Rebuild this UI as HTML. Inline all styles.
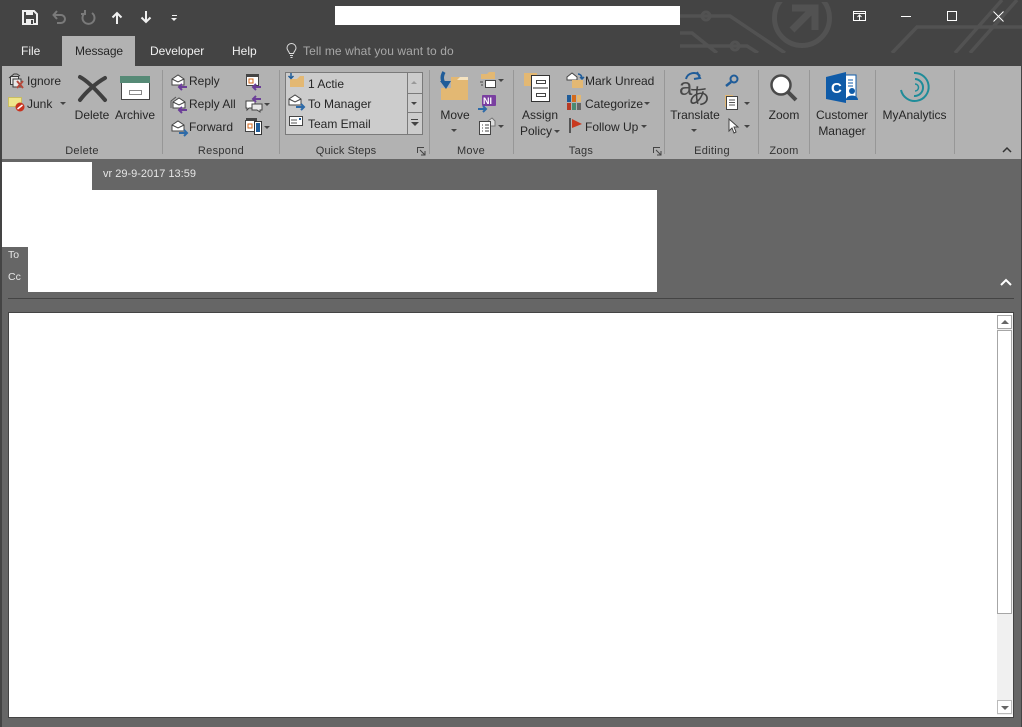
<!DOCTYPE html>
<html><head><meta charset="utf-8"><style>
html,body{margin:0;padding:0;background:#444}
#p{position:relative;width:1022px;height:727px;overflow:hidden;background:#444;font-family:"Liberation Sans",sans-serif;font-size:12px;color:#262626}
.t{position:absolute;white-space:nowrap;line-height:14px}
.c{position:absolute;white-space:nowrap;line-height:14px;text-align:center}
.g{position:absolute;white-space:nowrap;line-height:14px;text-align:center;top:144px;font-size:11px;color:#333;letter-spacing:.3px}
.b{position:absolute}
.sep{position:absolute;top:70px;width:1px;height:84px;background:#979797}
.a{position:absolute;width:0;height:0;border-left:3px solid transparent;border-right:3px solid transparent;border-top:3px solid #444}
.tab{position:absolute;top:44px;color:#f0f0f0;line-height:14px;font-size:12px}
svg{position:absolute;overflow:visible}
</style></head><body><div id="p">

<!-- title bar circuit pattern -->
<svg style="left:0;top:0;overflow:hidden" width="1022" height="53" fill="none" stroke="#525252" stroke-width="3.500">
<path d="M680 16H730L785 53M680 33H692L717 53M680 46H747L758 53"/>
<circle cx="706" cy="16" r="4" stroke-width="3"/><circle cx="735" cy="46" r="4" stroke-width="3"/>
<circle cx="802" cy="18" r="27.500" stroke-width="5"/>
<path d="M792 30L812 10M792 8H815V30" stroke-width="7"/>
<path d="M892 53L917 27H1022M955 53L1002 0M970 53L1017 0"/>
<rect x="760" y="0" width="80" height="2" fill="#444" stroke="none"/>
</svg>

<!-- QAT -->
<svg style="left:22px;top:10px" width="16" height="15"><path d="M1 1H12L15 4V14H1Z" fill="none" stroke="#f0f0f0" stroke-width="2"/><rect x="4" y="1" width="7" height="4" fill="#f0f0f0"/><rect x="4" y="9" width="8" height="5" fill="#f0f0f0"/><rect x="9" y="10" width="2" height="4" fill="#444"/></svg>
<svg style="left:52px;top:10px" width="15" height="15" fill="none" stroke="#7a7a7a" stroke-width="2"><path d="M2 5H9A4 4 0 0 1 9 13H5M5 1L1.500 5L5 9"/></svg>
<svg style="left:81px;top:10px" width="15" height="15" fill="none" stroke="#7a7a7a" stroke-width="2"><path d="M4 3A6 6 0 1 0 11 3M4 0V4H0"/></svg>
<svg style="left:111px;top:11px" width="12" height="13" fill="none" stroke="#f0f0f0" stroke-width="2"><path d="M6 13V2M1.500 6.500L6 2L10.500 6.500"/></svg>
<svg style="left:140px;top:11px" width="12" height="13" fill="none" stroke="#f0f0f0" stroke-width="2"><path d="M6 0V11M1.500 6.500L6 11L10.500 6.500"/></svg>
<div class="b" style="left:172px;top:15px;width:5px;height:1px;background:#f0f0f0"></div>
<div class="a" style="left:171px;top:18px;border-top-color:#f0f0f0"></div>

<div class="b" style="left:335px;top:6px;width:345px;height:19px;background:#fff"></div>

<!-- window controls -->
<svg style="left:853px;top:11px" width="14" height="11" fill="none" stroke="#fff"><rect x="0.500" y="0.500" width="12" height="9"/><path d="M0 2.500H13M6.500 9V4.500M4.500 6L6.500 4L8.500 6"/></svg>
<div class="b" style="left:901px;top:16px;width:10px;height:1px;background:#fff"></div>
<div class="b" style="left:947px;top:11px;width:8px;height:8px;border:1px solid #fff"></div>
<svg style="left:993px;top:11px" width="11" height="11" stroke="#fff"><path d="M0.500 0.500L10.500 10.500M10.500 0.500L0.500 10.500"/></svg>

<!-- tabs -->
<div class="b" style="left:62px;top:36px;width:73px;height:31px;background:#b2b2b2"></div>
<div class="tab" style="left:21px">File</div>
<div class="tab" style="left:75px;color:#262626;letter-spacing:-.1px">Message</div>
<div class="tab" style="left:150px;letter-spacing:-.05px">Developer</div>
<div class="tab" style="left:232px">Help</div>
<svg style="left:286px;top:43px" width="12" height="15" fill="none" stroke="#ddd"><path d="M3.500 10.500C3 8 1 7.500 1 5A4.500 4.500 0 0 1 10 5C10 7.500 8 8 7.500 10.500ZM4 12.500H7M4.500 14.500H6.500"/></svg>
<div class="tab" style="left:303px;color:#a8a8a8;letter-spacing:.1px">Tell me what you want to do</div>

<!-- ribbon -->
<div class="b" style="left:2px;top:66px;width:1019px;height:93px;background:#b2b2b2"></div>
<div class="sep" style="left:162px"></div>
<div class="sep" style="left:279px"></div>
<div class="sep" style="left:429px"></div>
<div class="sep" style="left:513px"></div>
<div class="sep" style="left:664px"></div>
<div class="sep" style="left:758px"></div>
<div class="sep" style="left:809px"></div>
<div class="sep" style="left:875px"></div>
<div class="sep" style="left:954px"></div>

<!-- Delete group -->
<svg style="left:8px;top:73px" width="17" height="16" fill="none" stroke="#3a3a3a"><path d="M1 5L6 1H9L12 3" /><rect x="2.500" y="3.500" width="8" height="8" fill="#e8e8e8"/><rect x="5" y="6" width="8" height="8" fill="#e8e8e8"/><path d="M9 8L15 15M15 8L9 15" stroke="#b5483a" stroke-width="2"/></svg>
<div class="t" style="left:27px;top:74px">Ignore</div>
<svg style="left:8px;top:97px" width="17" height="15"><rect x="0.500" y="0.500" width="13" height="9" fill="#efe58b" stroke="#c9bd62"/><circle cx="12" cy="10" r="4.500" fill="#c8321f"/><path d="M9.500 12L14.500 8" stroke="#fff" stroke-width="1.500"/></svg>
<div class="t" style="left:27px;top:97px">Junk</div>
<div class="a" style="left:60px;top:102px"></div>
<svg style="left:78px;top:75px" width="29" height="28" fill="none" stroke="#3f3f3f" stroke-width="4" stroke-linecap="round"><path d="M2 2C10 6 20 17 27 25M27 3C18 8 8 17 2 25"/></svg>
<div class="c" style="left:72px;top:108px;width:40px">Delete</div>
<div class="b" style="left:120px;top:76px;width:30px;height:7px;background:#568a76"></div>
<div class="b" style="left:121px;top:83px;width:27px;height:16px;background:#fff;border:1px solid #444;border-top:0"></div>
<div class="b" style="left:129px;top:90px;width:11px;height:3px;background:#fff;border:1px solid #888"></div>
<div class="c" style="left:112px;top:108px;width:46px">Archive</div>
<div class="g" style="left:62px;width:40px">Delete</div>

<!-- Respond group -->
<svg style="left:171px;top:74px" width="17" height="15"><path d="M1 5L7 1L13 5V11H1Z" fill="#fff" stroke="#444"/><path d="M1 5L7 8L13 5" fill="none" stroke="#444"/><path d="M16 13H9M11 10L8 13L11 16" fill="none" stroke="#6b3e98" stroke-width="2"/></svg>
<div class="t" style="left:189px;top:74px">Reply</div>
<svg style="left:170px;top:96px" width="18" height="16"><path d="M1 12V5L6 1" fill="none" stroke="#555"/><path d="M3 6L9 2L15 6V12H3Z" fill="#fff" stroke="#444"/><path d="M3 6L9 9L15 6" fill="none" stroke="#444"/><path d="M17 14H10M12 11L9 14L12 17" fill="none" stroke="#6b3e98" stroke-width="2"/></svg>
<div class="t" style="left:189px;top:97px">Reply All</div>
<svg style="left:171px;top:120px" width="17" height="15"><path d="M1 5L7 1L13 5V11H1Z" fill="#fff" stroke="#444"/><path d="M1 5L7 8L13 5" fill="none" stroke="#444"/><path d="M8 13H15M13 10L16 13L13 16" fill="none" stroke="#2d6aa8" stroke-width="2"/></svg>
<div class="t" style="left:189px;top:120px">Forward</div>
<svg style="left:246px;top:74px" width="16" height="16"><rect x="0.500" y="0.500" width="12" height="11" fill="#fff" stroke="#444"/><rect x="1" y="1" width="11" height="2" fill="#444"/><rect x="3" y="5" width="4" height="4" fill="none" stroke="#d46a1c"/><path d="M15 13H8M10 10L7 13L10 16" fill="none" stroke="#6b3e98" stroke-width="2"/></svg>
<svg style="left:245px;top:95px" width="20" height="17"><path d="M1 6H10V13H4L2 15V13H1Z" fill="#fff" stroke="#444"/><path d="M7 9H17V15H15V17L12 15H7Z" fill="#e8e8e8" stroke="#444"/><path d="M16 4H9M11 1L8 4L11 7" fill="none" stroke="#6b3e98" stroke-width="2"/></svg>
<div class="a" style="left:264px;top:103px"></div>
<svg style="left:245px;top:118px" width="18" height="18"><rect x="0.500" y="2.500" width="11" height="11" fill="#fff" stroke="#444"/><rect x="1" y="0" width="11" height="2" fill="#444"/><rect x="3" y="6" width="4" height="4" fill="none" stroke="#d46a1c"/><rect x="9.500" y="3.500" width="7" height="13" fill="#fff" stroke="#333"/><rect x="11" y="5" width="4" height="9" fill="#1f5c99"/></svg>
<div class="a" style="left:264px;top:126px"></div>
<div class="g" style="left:191px;width:60px">Respond</div>

<!-- Quick Steps -->
<div class="b" style="left:285px;top:72px;width:136px;height:61px;background:#ccc;border:1px solid #7a7a7a"></div>
<div class="b" style="left:407px;top:73px;width:1px;height:61px;background:#7a7a7a"></div>
<div class="b" style="left:408px;top:93px;width:14px;height:1px;background:#7a7a7a"></div>
<div class="b" style="left:408px;top:112px;width:14px;height:1px;background:#7a7a7a"></div>
<div class="a" style="left:411px;top:81px;border-top:0;border-bottom:3px solid #999"></div>
<div class="a" style="left:411px;top:102px"></div>
<div class="b" style="left:411px;top:119px;width:7px;height:1px;background:#444"></div>
<div class="a" style="left:411px;top:122px;border-left-width:4px;border-right-width:4px;border-top-width:4px"></div>
<svg style="left:287px;top:73px" width="18" height="15"><path d="M3 6H10L13 3H17V14H3Z" fill="#e3b873"/><path d="M4 0V5M1.500 3L4 5.500L6.500 3" fill="none" stroke="#1f5c99" stroke-width="1.500"/></svg>
<div class="t" style="left:308px;top:77px">1 Actie</div>
<svg style="left:288px;top:94px" width="17" height="16"><path d="M1 5L7 1L13 5V11H1Z" fill="#fff" stroke="#444"/><path d="M1 5L7 8L13 5" fill="none" stroke="#444"/><path d="M8 13H15M13 10L16 13L13 16" fill="none" stroke="#2d6aa8" stroke-width="2"/></svg>
<div class="t" style="left:308px;top:97px">To Manager</div>
<svg style="left:289px;top:116px" width="15" height="11"><rect x="0.500" y="0.500" width="13" height="9" fill="#fff" stroke="#444"/><rect x="10" y="2" width="2" height="2" fill="#1f5c99"/><path d="M2 4H8M2 7H8" stroke="#555"/></svg>
<div class="t" style="left:308px;top:117px">Team Email</div>
<div class="g" style="left:306px;width:80px;letter-spacing:.1px">Quick Steps</div>
<svg style="left:417px;top:147px" width="9" height="9" fill="none" stroke="#444"><path d="M0.500 6V0.500H7M3 3L7.500 7.500M8 4V8H4"/></svg>

<!-- Move -->
<svg style="left:438px;top:72px" width="32" height="29"><path d="M3 16H13V5H30V28H3Z" fill="#e3b873"/><path d="M19 8L22 5H30V8Z" fill="#f5e3c0"/><path d="M6 0C3 5 4 10 8 13" fill="none" stroke="#1f5c99" stroke-width="3.500"/><path d="M2 9L8 17L13 9Z" fill="#1f5c99"/></svg>
<div class="c" style="left:435px;top:108px;width:40px">Move</div>
<div class="a" style="left:451px;top:129px"></div>
<svg style="left:479px;top:72px" width="18" height="17"><path d="M2 7V2H8L10 0H16V7Z" fill="#e3b873"/><rect x="6.500" y="8.500" width="10" height="7" fill="#fff" stroke="#444"/><path d="M1 10H4M2 13H4" stroke="#444"/></svg>
<div class="a" style="left:498px;top:79px"></div>
<svg style="left:478px;top:95px" width="19" height="17"><rect x="4" y="0" width="14" height="11" rx="1" fill="#7a3fa0"/><text x="5" y="9" font-family="Liberation Sans" font-size="9" font-weight="bold" fill="#fff">Nl</text><path d="M0 14H7M5 11L8 14L5 17" fill="none" stroke="#2d6aa8" stroke-width="2"/></svg>
<svg style="left:479px;top:118px" width="18" height="17"><path d="M9 3L13 0L16 3V8H9Z" fill="#ddd" stroke="#777"/><rect x="0.500" y="3.500" width="11" height="13" fill="#fff" stroke="#444"/><path d="M3 7H4M6 7H10M3 10H4M6 10H10M3 13H4M6 13H10" stroke="#444"/></svg>
<div class="a" style="left:498px;top:125px"></div>
<div class="g" style="left:451px;width:40px">Move</div>

<!-- Tags -->
<svg style="left:524px;top:72px" width="28" height="31"><path d="M0 1H13V14H0Z" fill="#e3b873"/><rect x="7.500" y="3.500" width="18" height="26" fill="#fff" stroke="#333"/><path d="M9 16H24" stroke="#333"/><rect x="12.500" y="8.500" width="9" height="3" fill="none" stroke="#444"/><rect x="12.500" y="21.500" width="9" height="3" fill="none" stroke="#444"/></svg>
<div class="c" style="left:515px;top:108px;width:50px">Assign</div>
<div class="t" style="left:520px;top:124px">Policy</div>
<div class="a" style="left:554px;top:130px"></div>
<svg style="left:566px;top:72px" width="18" height="17"><path d="M1 5L6 1L11 5V8H1Z" fill="#fff" stroke="#444"/><path d="M6 8H17V16H6Z" fill="#e3b873"/><path d="M12 2A4 4 0 0 1 16 6M14 5L16 7L18 5" fill="none" stroke="#1f5c99" stroke-width="1.500"/></svg>
<div class="t" style="left:585px;top:74px">Mark Unread</div>
<svg style="left:567px;top:95px" width="15" height="15"><rect x="0" y="0" width="4" height="7" fill="#1f5c99"/><rect x="5" y="0" width="4" height="7" fill="#d46a1c"/><rect x="10" y="0" width="4" height="7" fill="#e3b873"/><rect x="0" y="8" width="4" height="7" fill="#b83a24"/><rect x="5" y="8" width="4" height="7" fill="#4a8a72"/><rect x="10" y="8" width="4" height="7" fill="#666"/></svg>
<div class="t" style="left:585px;top:97px">Categorize</div>
<div class="a" style="left:644px;top:102px"></div>
<svg style="left:569px;top:118px" width="14" height="15"><rect x="0" y="0" width="2" height="15" fill="#555"/><path d="M3 1L13 6L3 10Z" fill="#c8391f"/></svg>
<div class="t" style="left:585px;top:120px">Follow Up</div>
<div class="a" style="left:641px;top:125px"></div>
<div class="g" style="left:561px;width:40px">Tags</div>
<svg style="left:653px;top:147px" width="9" height="9" fill="none" stroke="#444"><path d="M0.500 6V0.500H7M3 3L7.500 7.500M8 4V8H4"/></svg>

<!-- Editing -->
<svg style="left:679px;top:71px" width="32" height="34"><path d="M7 8A8 8 0 0 1 21 5M18 1L21 7L15 8" fill="none" stroke="#1f5c99" stroke-width="2"/><text x="0" y="24" font-family="Liberation Sans" font-size="24" fill="#4a4a4a">a</text><text x="9" y="33" font-family="Noto Sans CJK JP" font-size="22" fill="#444">あ</text></svg>
<div class="c" style="left:670px;top:108px;width:50px">Translate</div>
<div class="a" style="left:691px;top:129px"></div>
<svg style="left:725px;top:73px" width="14" height="15" fill="none" stroke="#1f5c99"><circle cx="9" cy="6" r="3.500" stroke-width="2"/><path d="M6 9L1 13" stroke-width="2.500"/></svg>
<svg style="left:725px;top:95px" width="15" height="17"><path d="M0.500 12V0.500H8" fill="none" stroke="#e3b873"/><rect x="1.500" y="1.500" width="11" height="13" fill="#fff" stroke="#444"/><path d="M4 5H10M4 7.500H10M4 10H10" stroke="#555"/></svg>
<div class="a" style="left:744px;top:102px"></div>
<svg style="left:728px;top:118px" width="12" height="16"><path d="M1 1V13L4 10L6 15L8 14L6 9H10Z" fill="#fff" stroke="#444"/></svg>
<div class="a" style="left:744px;top:125px"></div>
<div class="g" style="left:687px;width:50px">Editing</div>

<!-- Zoom -->
<svg style="left:769px;top:73px" width="30" height="30"><circle cx="12" cy="12" r="9.500" fill="#fff" stroke="#4a4a4a" stroke-width="2.500"/><path d="M19 19L27 27" stroke="#4a4a4a" stroke-width="4"/></svg>
<div class="c" style="left:764px;top:108px;width:40px">Zoom</div>
<div class="g" style="left:764px;width:40px">Zoom</div>

<!-- Customer Manager -->
<svg style="left:826px;top:72px" width="34" height="31"><rect x="15" y="3" width="15" height="24" fill="#fff" stroke="#0f5ba8"/><path d="M0 5L20 0V31L0 27Z" fill="#0f5ba8"/><text x="5" y="21" font-family="Liberation Sans" font-size="15" font-weight="bold" fill="#fff">C</text><path d="M22 8H27M22 11H27M22 14H27" stroke="#0f5ba8"/><circle cx="26" cy="19" r="3" fill="#0f5ba8"/><path d="M20 28C20 22 32 22 32 28Z" fill="#0f5ba8"/></svg>
<div class="c" style="left:809px;top:108px;width:66px">Customer</div>
<div class="c" style="left:809px;top:124px;width:66px">Manager</div>

<!-- MyAnalytics -->
<svg style="left:899px;top:72px" width="32" height="32" fill="none" stroke="#1f8c99"><path d="M15 1A14 14 0 1 1 2 18" stroke-width="2"/><path d="M16 7A8.500 8.500 0 0 1 15 24" stroke-width="2"/><path d="M16 12A3.500 3.500 0 0 1 16 19" stroke-width="1.500"/></svg>
<div class="c" style="left:875px;top:108px;width:79px">MyAnalytics</div>

<svg style="left:1002px;top:147px" width="10" height="6" fill="none" stroke="#333" stroke-width="1.500"><path d="M1 5L5 1L9 5"/></svg>

<!-- body -->
<div class="b" style="left:2px;top:159px;width:1019px;height:568px;background:#666"></div>
<div class="b" style="left:2px;top:162px;width:90px;height:28px;background:#fff"></div>
<div class="b" style="left:2px;top:190px;width:655px;height:57px;background:#fff"></div>
<div class="b" style="left:28px;top:247px;width:629px;height:45px;background:#fff"></div>
<div class="t" style="left:103px;top:167px;color:#e6e6e6;font-size:11px">vr 29-9-2017 13:59</div>
<div class="t" style="left:8px;top:248px;color:#e6e6e6;font-size:10.500px">To</div>
<div class="t" style="left:8px;top:270px;color:#e6e6e6;font-size:10.500px">Cc</div>
<svg style="left:1000px;top:278px" width="12" height="8" fill="none" stroke="#fff" stroke-width="2"><path d="M1 7L6 2L11 7"/></svg>
<div class="b" style="left:8px;top:298px;width:1006px;height:1px;background:#444"></div>

<!-- message box -->
<div class="b" style="left:8px;top:312px;width:1004px;height:404px;background:#fff;border:1px solid #444"></div>
<div class="b" style="left:997px;top:315px;width:16px;height:400px;background:#f0f0f0"></div>
<div class="b" style="left:997px;top:315px;width:13px;height:12px;background:#fff;border:1px solid #a6a6a6"></div>
<div class="a" style="left:1001px;top:320px;border-top:0;border-bottom:4px solid #666;border-left-width:4px;border-right-width:4px"></div>
<div class="b" style="left:997px;top:330px;width:13px;height:282px;background:#fff;border:1px solid #a6a6a6"></div>
<div class="b" style="left:997px;top:700px;width:13px;height:12px;background:#fff;border:1px solid #bbb"></div>
<div class="a" style="left:1001px;top:706px;border-top:4px solid #666;border-left-width:4px;border-right-width:4px"></div>

</div></body></html>
